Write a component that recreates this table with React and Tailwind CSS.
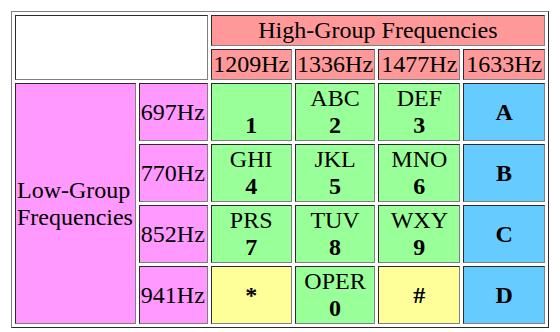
import React from 'react';

const rows = [
  {
    freq: '697Hz',
    keys: [
      { top: '\u00a0', key: '1', color: 'green' },
      { top: 'ABC', key: '2', color: 'green' },
      { top: 'DEF', key: '3', color: 'green' },
      { key: 'A', color: 'blue' },
    ],
  },
  {
    freq: '770Hz',
    keys: [
      { top: 'GHI', key: '4', color: 'green' },
      { top: 'JKL', key: '5', color: 'green' },
      { top: 'MNO', key: '6', color: 'green' },
      { key: 'B', color: 'blue' },
    ],
  },
  {
    freq: '852Hz',
    keys: [
      { top: 'PRS', key: '7', color: 'green' },
      { top: 'TUV', key: '8', color: 'green' },
      { top: 'WXY', key: '9', color: 'green' },
      { key: 'C', color: 'blue' },
    ],
  },
  {
    freq: '941Hz',
    keys: [
      { key: '*', color: 'yellow' },
      { top: 'OPER', key: '0', color: 'green' },
      { key: '#', color: 'yellow' },
      { key: 'D', color: 'blue' },
    ],
  },
];

const highFreqs = [
  { label: '1209Hz', width: 'w-[81px]' },
  { label: '1336Hz', width: 'w-[81px]' },
  { label: '1477Hz', width: 'w-[82px]' },
  { label: '1633Hz', width: 'w-[82px]' },
];

const bg = {
  green: 'bg-[#99ff99]',
  blue: 'bg-[#66ccff]',
  yellow: 'bg-[#ffff99]',
};

// inset look of an old-school border="1" table cell
const cell =
  'border border-solid border-[#2b2b2b] border-r-[#808080] border-b-[#808080] p-px';

export default function App() {
  return (
    <div className="p-[11px] bg-white font-['Liberation_Serif',serif] text-[24px] leading-[27px] text-black">
      <table className="border-separate border-spacing-[3px] border border-solid border-[#808080] border-r-[#2b2b2b] border-b-[#2b2b2b]">
        <tbody>
          <tr>
            <td colSpan={2} rowSpan={2} className={`${cell} bg-white`}></td>
            <th colSpan={4} className={`${cell} bg-[#ff9999] font-normal text-center`}>
              High-Group Frequencies
            </th>
          </tr>
          <tr>
            {highFreqs.map((f) => (
              <th key={f.label} className={`${cell} ${f.width} bg-[#ff9999] font-normal text-center`}>
                {f.label}
              </th>
            ))}
          </tr>
          {rows.map((row, i) => (
            <tr key={row.freq}>
              {i === 0 && (
                <td rowSpan={4} className={`${cell} bg-[#ff99ff] text-left align-middle w-[121px]`}>
                  Low-Group Frequencies
                </td>
              )}
              <td className={`${cell} bg-[#ff99ff] text-left align-middle w-[69px]`}>{row.freq}</td>
              {row.keys.map((k) => (
                <td key={k.key} className={`${cell} ${bg[k.color]} text-center align-middle`}>
                  {k.top && (
                    <>
                      {k.top}
                      <br />
                    </>
                  )}
                  <b>{k.key}</b>
                </td>
              ))}
            </tr>
          ))}
        </tbody>
      </table>
    </div>
  );
}
